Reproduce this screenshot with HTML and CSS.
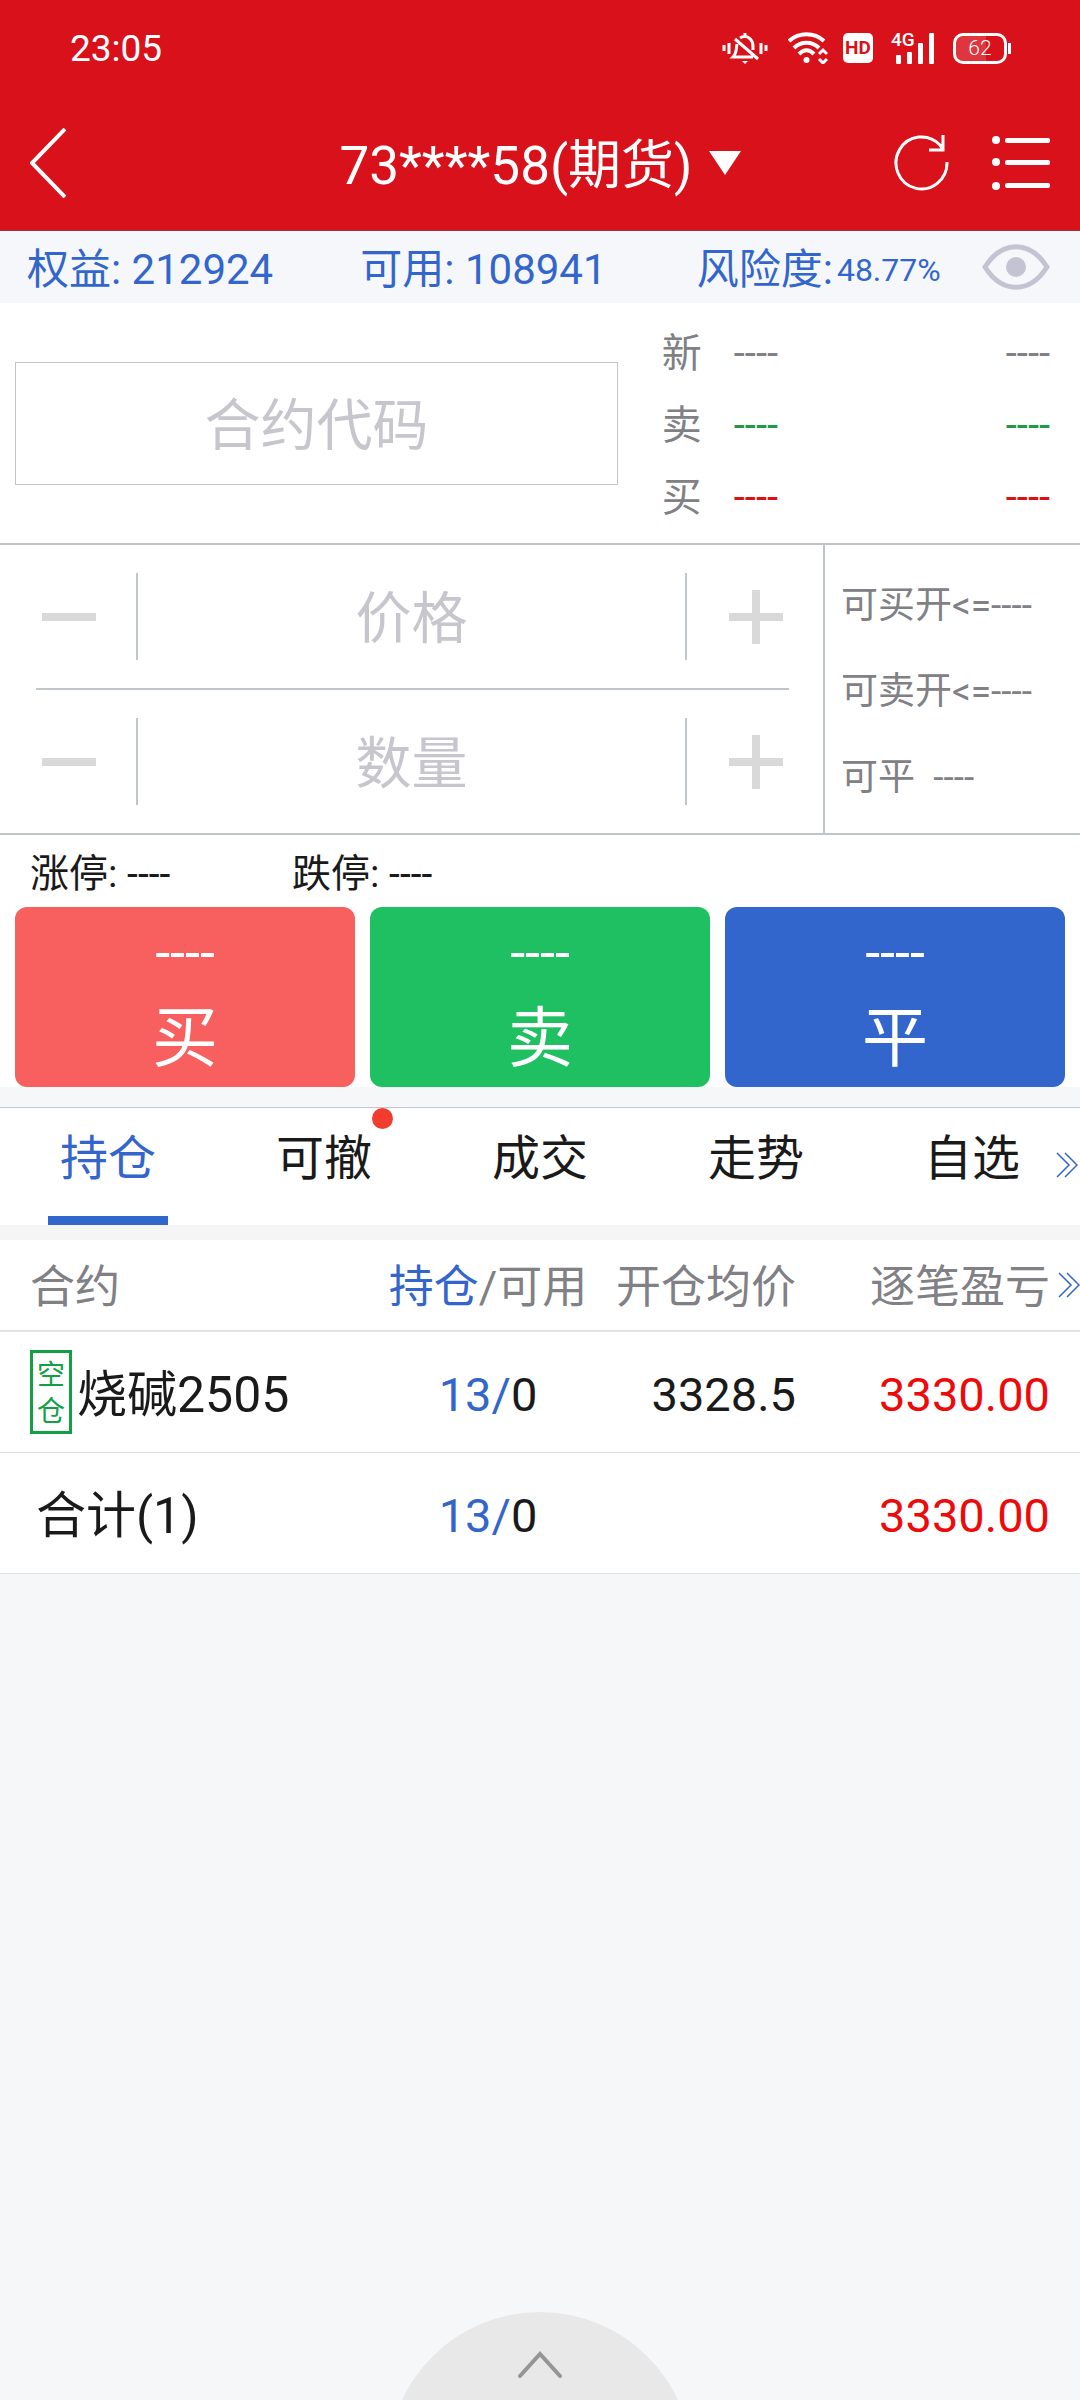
FILE: index.html
```html
<!DOCTYPE html>
<html lang="zh-CN">
<head>
<meta charset="utf-8">
<meta name="viewport" content="width=device-width, initial-scale=1">
<title>期货交易</title>
<link rel="stylesheet" href="styles.css">
</head>
<body>
<div class="app">
  <header class="top">
    <div class="status">
      <span class="clock">23:05</span>
      <div class="status-icons">
        <svg class="ico-bell" viewBox="0 0 46 32" fill="none" stroke="#fff" stroke-width="3">
          <path d="M2 13v6M7 11v11M39 11v11M44 13v6"/>
          <path d="M23 1v4M18 6c3-2 7-2 9 0 3 2 4 5 4 9v3"/>
          <path d="M15 12c-1 5 0 9-4 13h20M13 7l23 20"/>
          <path d="M20 29h6l-3 3z" fill="#fff" stroke="none"/>
        </svg>
        <svg class="ico-wifi" viewBox="0 0 40 32" fill="none" stroke="#fff" stroke-width="4">
          <path d="M1 9C11 0 26 0 36 9M6 16c7-7 18-7 25 0M11 22c5-5 10-5 15 0"/>
          <circle cx="18.500" cy="28" r="3" fill="#fff" stroke="none"/>
          <path d="M31 22l4-4 4 4M31 27l4 4 4-4" stroke-width="3"/>
        </svg>
        <span class="hd">HD</span>
        <span class="signal">
          <span class="net">4G</span>
          <svg class="ico-bars" viewBox="0 0 40 32" fill="#fff">
            <rect x="1" y="23" width="5" height="9" rx="1"/><rect x="12" y="20" width="5" height="12" rx="1"/><rect x="23" y="11" width="5" height="21" rx="1"/><rect x="34" y="1" width="5" height="31" rx="1"/>
          </svg>
        </span>
        <span class="battery"><span class="level">62</span></span>
      </div>
    </div>
    <div class="nav">
      <button class="icon-btn" type="button" aria-label="返回">
        <svg class="ico-back" viewBox="0 0 36 70" fill="none" stroke="#fff" stroke-width="4"><path d="M35 1L2 35l33 34"/></svg>
      </button>
      <button class="account" type="button"><span class="account-name">73****58(期货)</span><svg class="ico-caret" viewBox="0 0 32 24" fill="#fff"><path d="M0 0h32L16 24z"/></svg></button>
      <div class="nav-actions">
        <button class="icon-btn" type="button" aria-label="刷新">
          <svg class="ico-refresh" viewBox="0 0 56 56" fill="none" stroke="#fff" stroke-width="3"><path d="M53 27A25.500 26 0 1 1 46 10L49 15M49 0v15H35"/></svg>
        </button>
        <button class="icon-btn" type="button" aria-label="菜单">
          <svg class="ico-list" viewBox="0 0 58 54" fill="#fff"><circle cx="4" cy="4" r="4"/><circle cx="4" cy="26" r="4"/><circle cx="4" cy="50" r="4"/><rect x="13" y="2" width="45" height="5" rx="2"/><rect x="13" y="24" width="45" height="5" rx="2"/><rect x="13" y="47" width="45" height="5" rx="2"/></svg>
        </button>
      </div>
    </div>
  </header>

  <section class="funds">
    <span class="fund equity">权益: 212924</span>
    <span class="fund avail">可用: 108941</span>
    <span class="fund risk">风险度:<span class="ratio">48.77%</span></span>
    <button class="icon-btn" type="button" aria-label="隐藏资金">
      <svg class="ico-eye" viewBox="0 0 68 48" fill="none" stroke="#c4c3d3" stroke-width="5"><path d="M3 24C20-3 48-3 65 24C48 51 20 51 3 24z"/><circle cx="34" cy="24" r="10" fill="#c4c3d3" stroke="none"/></svg>
    </button>
  </section>

  <section class="contract">
    <input class="code" type="text" placeholder="合约代码" aria-label="合约代码">
    <dl class="quotes">
      <div class="quote"><dt>新</dt><dd>----</dd><dd>----</dd></div>
      <div class="quote sell"><dt>卖</dt><dd>----</dd><dd>----</dd></div>
      <div class="quote buy"><dt>买</dt><dd>----</dd><dd>----</dd></div>
    </dl>
  </section>

  <section class="entry">
    <div class="steppers">
      <div class="stepper">
        <button class="step minus" type="button" aria-label="减少价格"></button>
        <input class="value" type="text" placeholder="价格" aria-label="价格">
        <button class="step plus" type="button" aria-label="增加价格"></button>
      </div>
      <div class="stepper">
        <button class="step minus" type="button" aria-label="减少数量"></button>
        <input class="value" type="text" placeholder="数量" aria-label="数量">
        <button class="step plus" type="button" aria-label="增加数量"></button>
      </div>
    </div>
    <div class="limits">
      <span>可买开&lt;=----</span>
      <span>可卖开&lt;=----</span>
      <span>可平  ----</span>
    </div>
  </section>

  <section class="order">
    <div class="bounds"><span>涨停: ----</span><span>跌停: ----</span></div>
    <div class="actions">
      <button class="action act-buy" type="button"><span class="act-price">----</span><span class="act-name">买</span></button>
      <button class="action act-sell" type="button"><span class="act-price">----</span><span class="act-name">卖</span></button>
      <button class="action act-close" type="button"><span class="act-price">----</span><span class="act-name">平</span></button>
    </div>
  </section>

  <nav class="tabs">
    <button class="tab active" type="button">持仓</button>
    <button class="tab" type="button">可撤<span class="dot"></span></button>
    <button class="tab" type="button">成交</button>
    <button class="tab" type="button">走势</button>
    <button class="tab" type="button">自选</button>
    <svg class="more" viewBox="0 0 22 26" fill="none" stroke="#3366cc" stroke-width="1.500"><path d="M1 1l12 12L1 25M9 1l12 12L9 25"/></svg>
  </nav>

  <section class="positions">
    <table class="grid">
      <colgroup><col class="c-name"><col class="c-qty"><col class="c-avg"><col class="c-pnl"></colgroup>
      <thead>
        <tr><th>合约</th><th class="qty"><span class="blue">持仓</span>/可用</th><th class="num avg">开仓均价</th><th class="num">逐笔盈亏</th></tr>
      </thead>
      <tbody>
        <tr><td><div class="name"><span class="side">空仓</span><span>烧碱2505</span></div></td><td class="qty"><span class="blue">13/</span>0</td><td class="num avg">3328.5</td><td class="num red">3330.00</td></tr>
        <tr><td><div class="name total"><span>合计(1)</span></div></td><td class="qty"><span class="blue">13/</span>0</td><td class="num avg"></td><td class="num red">3330.00</td></tr>
      </tbody>
    </table>
    <svg class="more" viewBox="0 0 22 26" fill="none" stroke="#3366cc" stroke-width="1.500"><path d="M1 1l12 12L1 25M9 1l12 12L9 25"/></svg>
  </section>

  <button class="drawer" type="button" aria-label="展开">
    <svg class="ico-drawer" viewBox="0 0 304 88"><circle cx="152" cy="152" r="152" fill="#e8e8e9"/><path d="M132 64l20-22 20 22" fill="none" stroke="#959595" stroke-width="4" stroke-linecap="round"/></svg>
  </button>
</div>
</body>
</html>
```
FILE: styles.css
```css
* { box-sizing: border-box; }

body {
  margin: 0;
  background: #f6f7f9;
  color: #1a1a1a;
  font-family: Roboto, "Noto Sans CJK SC", sans-serif;
}

button, input { font: inherit; color: inherit; }
button { border: 0; padding: 0; background: none; }
svg { display: block; }

.app { min-height: 100vh; display: flex; flex-direction: column; }

/* Header */
.top { background: #d9111a; color: #fff; border-bottom: 1px solid #8f3a40; }
.status { height: 96px; padding: 0 69px 0 70px; display: flex; align-items: center; justify-content: space-between; }
.clock { padding-top: 2px; font-size: 37px; line-height: 48px; }
.status-icons { display: flex; align-items: center; }
.ico-bell { width: 46px; height: 32px; margin-right: 20px; }
.ico-wifi { width: 40px; height: 32px; margin-right: 15px; }
.hd { width: 30px; height: 30px; margin-right: 18px; border-radius: 5px; background: #fff; color: #d9111a; font-size: 19px; font-weight: 700; line-height: 30px; text-align: center; }
.signal { position: relative; width: 44px; height: 32px; margin-right: 18px; display: flex; justify-content: flex-end; }
.net { position: absolute; left: 0; top: 0; font-size: 19px; font-weight: 500; line-height: 16px; }
.ico-bars { width: 40px; height: 32px; }
.battery { position: relative; width: 54px; height: 31px; margin-right: 4px; border: 3px solid #fff; border-radius: 10px; background: linear-gradient(to right, #e0353d 62%, #d9111a 62%); text-align: center; }
.battery::after { content: ""; position: absolute; right: -7px; top: 7px; width: 3px; height: 11px; background: #fff; }
.level { display: block; font-size: 21px; font-weight: 300; line-height: 25px; }

.nav { height: 134px; padding: 0 30px; display: grid; grid-template-columns: 1fr auto 1fr; align-items: center; }
.icon-btn { display: flex; align-items: center; justify-self: start; }
.ico-back { width: 36px; height: 70px; }
.account { display: flex; align-items: center; gap: 16px; font-size: 53px; line-height: 64px; }
.account-name { padding-top: 6px; }
.ico-caret { width: 32px; height: 24px; }
.nav-actions { justify-self: end; display: flex; align-items: center; gap: 42px; }
.ico-refresh { width: 56px; height: 56px; }
.ico-list { width: 58px; height: 54px; }

/* Account funds */
.funds { height: 72px; padding: 0 30px 0 27px; display: flex; align-items: center; background: #f6f7fa; color: #3366cc; font-size: 42px; line-height: 66px; }
.equity { flex: 333; }
.avail { flex: 336; }
.risk { flex: 285; display: flex; gap: 4px; }
.fund { padding-top: 5px; white-space: nowrap; }
.ratio { font-size: 32px; }
.ico-eye { width: 68px; height: 48px; }

/* Contract code and quotes */
.contract { padding: 0 30px 0 15px; display: flex; align-items: center; gap: 44px; background: #fff; border-bottom: 2px solid #c0c5ca; }
.code { flex: 602; min-width: 0; height: 123px; padding: 5px 0 0; border: 1px solid #c0c5ca; border-radius: 0; background: #fff; font-size: 56px; text-align: center; }
.code::placeholder, .value::placeholder { color: #c7c6cd; opacity: 1; }
.quotes { flex: 389; margin: 0; padding: 15px 0 9px; color: #808085; font-size: 40px; line-height: 72px; }
.quote { display: flex; }
.quote dt { width: 72px; }
.quote dd { margin: 0; }
.quote dd:last-child { margin-left: auto; }
.sell dd { color: #229944; }
.buy dd { color: #dd1111; }

/* Price and quantity */
.entry { display: grid; grid-template-columns: minmax(0, 823fr) minmax(0, 257fr); background: #fff; border-bottom: 2px solid #c0c5ca; }
.steppers { padding: 0 34px 0 36px; }
.stepper { height: 143px; display: flex; align-items: center; }
.stepper + .stepper { height: 145px; border-top: 2px solid #c0c5ca; }
.step { position: relative; height: 87px; flex: none; }
.minus { border-right: 2px solid #c0c5ca; width: 102px; }
.plus { border-left: 2px solid #c0c5ca; width: 104px; }
.step::before { content: ""; position: absolute; top: 40px; left: 6px; width: 54px; height: 8px; background: #d9d9d9; }
.plus::before { left: 42px; }
.plus::after { content: ""; position: absolute; left: 65px; top: 17px; width: 8px; height: 54px; background: #d9d9d9; }
.value { flex: 1; min-width: 0; height: 87px; padding: 5px 0 0; border: 0; background: none; font-size: 56px; text-align: center; }
.limits { padding: 5px 0 0 16px; border-left: 2px solid #c0c5ca; display: flex; flex-direction: column; justify-content: center; color: #808085; font-size: 37px; line-height: 86px; white-space: pre; }

/* Order buttons */
.order { background: #fff; }
.bounds { padding: 6px 30px 0; display: grid; grid-template-columns: 262px 1fr; font-size: 39px; line-height: 66px; }
.actions { padding: 0 15px; display: flex; gap: 15px; }
.action { flex: 1; height: 180px; padding-top: 10px; border-radius: 12px; color: #fff; display: flex; flex-direction: column; align-items: center; }
.act-buy { background: #f85f5f; }
.act-sell { background: #1fc062; }
.act-close { background: #3366cc; }
.act-price { font-size: 54px; line-height: 72px; }
.act-name { font-size: 66px; line-height: 100px; }

/* Tabs */
.tabs { position: relative; margin-top: 20px; border-top: 1px solid #c0c3d0; background: #fff; display: flex; }
.tab { position: relative; flex: 1; height: 117px; padding: 2px 0 18px; font-size: 48px; line-height: 97px; }
.active { color: #3366cc; }
.active::after { content: ""; position: absolute; left: 50%; bottom: 0; width: 120px; height: 9px; margin-left: -60px; background: #3366cc; }
.dot { position: absolute; left: 156px; top: 0; width: 21px; height: 21px; border-radius: 50%; background: #f43b30; }
.more { position: absolute; top: 44px; right: 2px; width: 22px; height: 26px; }

/* Positions */
.positions { position: relative; border-top: 15px solid #f5f5f5; }
.positions .more { top: 32px; right: 0; }
.grid { width: 100%; table-layout: fixed; border-collapse: separate; border-spacing: 0; background: #fff; }
.c-name { width: 35%; }
.c-qty { width: 20%; }
.c-avg { width: 20%; }
.c-pnl { width: 25%; }
.grid th { height: 92px; padding: 6px 0 0; border-bottom: 2px solid #e0e3e8; color: #808085; font-size: 45px; font-weight: 400; line-height: 84px; text-align: left; white-space: nowrap; }
.grid td { height: 121px; padding: 6px 0 0; border-bottom: 1px solid #e0e3e6; font-size: 47px; line-height: 114px; white-space: nowrap; }
.grid th:first-child { padding-left: 30px; }
.grid td:first-child { padding: 0 0 0 30px; }
.grid .qty { padding-left: 4px; text-align: center; }
.grid .num { padding-right: 30px; text-align: right; }
.grid .avg { padding-right: 14px; }
.grid .blue { color: #3366cc; }
.grid .red { color: #ee0a0a; }
.name { height: 120px; display: flex; align-items: center; gap: 5px; font-size: 50px; }
.name span:last-child { padding-top: 6px; }
.total { padding-left: 6px; }
.side { width: 42px; height: 84px; padding: 5px 4px 0; border: 3px solid #12a045; color: #12a045; font-size: 28px; line-height: 36px; white-space: normal; word-break: break-all; }

/* Bottom drawer handle */
.drawer { margin: auto auto 0; }
.ico-drawer { width: 304px; height: 88px; }
```
